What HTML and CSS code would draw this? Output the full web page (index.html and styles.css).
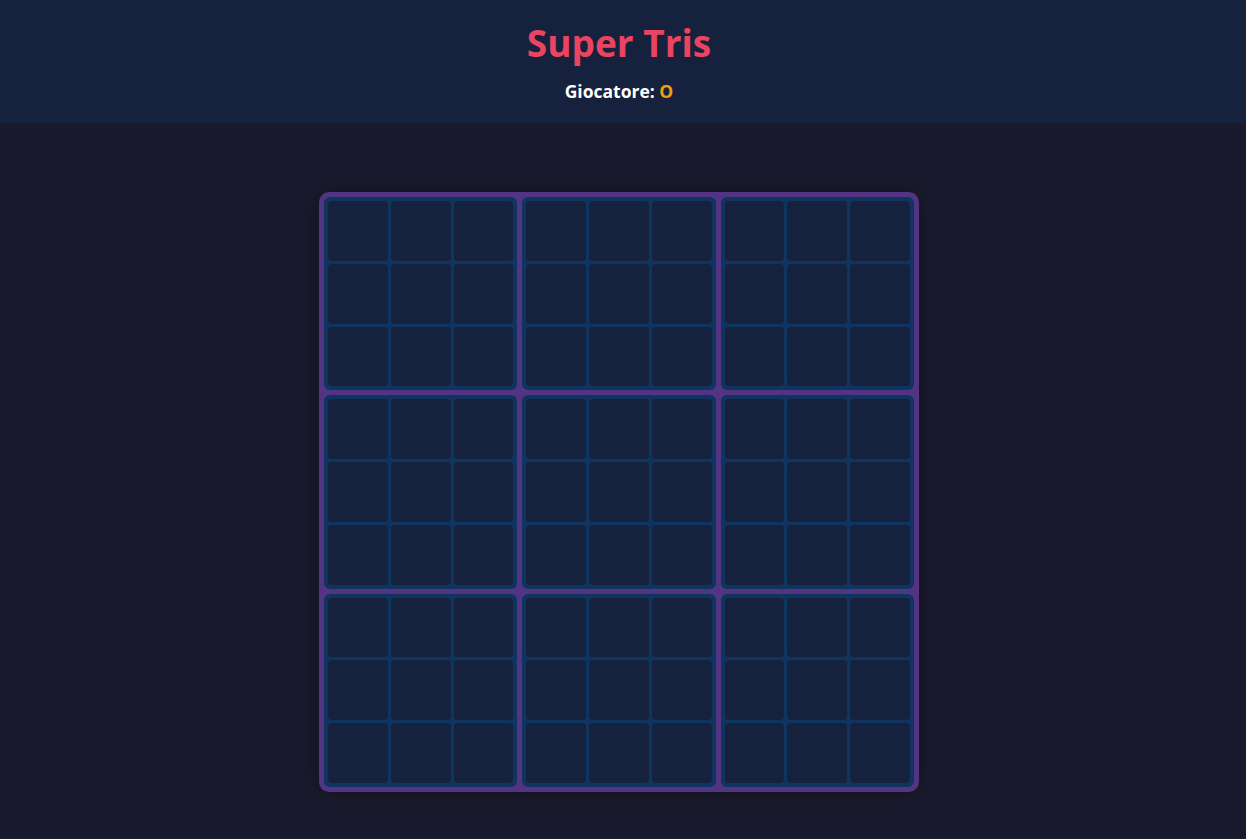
FILE: index.html
```html
<!DOCTYPE html>
<html lang="it">
<head>
<meta charset="utf-8">
<title>Super Tris</title>
<link rel="stylesheet" href="styles.css">
</head>
<body>
<header class="top">
  <h1 class="title">Super Tris</h1>
  <div class="status">Giocatore: <span class="player">O</span></div>
</header>
<main class="main">
  <div class="board" id="board"></div>
</main>
<script>
  var board = document.getElementById('board');
  for (var i = 0; i < 9; i++) {
    var sb = document.createElement('div');
    sb.className = 'small';
    for (var j = 0; j < 9; j++) {
      var c = document.createElement('div');
      c.className = 'cell';
      sb.appendChild(c);
    }
    board.appendChild(sb);
  }
</script>
</body>
</html>
```
FILE: styles.css
```css
* { box-sizing: border-box; }
html, body { margin: 0; padding: 0; }
body {
  background: #1a1a2e;
  font-family: "Open Sans", "Noto Sans", sans-serif;
  color: #ffffff;
  min-height: 839px;
}
.top {
  background: #16213e;
  height: 123px;
  text-align: center;
  padding-top: 18px;
  padding-right: 8px;
}
.title {
  margin: 0;
  color: #e94560;
  font-size: 37px;
  font-weight: 700;
  line-height: 50px;
}
.status {
  margin-top: 11px;
  font-size: 17.5px;
  font-weight: 700;
  line-height: 24px;
}
.player { color: #f39c12; }
.main {
  display: flex;
  justify-content: center;
  padding-top: 69px;
  padding-right: 8px;
}
.board {
  width: 600px;
  height: 600px;
  background: #533483;
  border-radius: 10px;
  padding: 5px;
  display: grid;
  grid-template-columns: repeat(3, 1fr);
  grid-template-rows: repeat(3, 1fr);
  gap: 5px;
  box-shadow: 0 0 20px rgba(0, 0, 0, 0.35);
}
.small {
  background: #0f3460;
  border-radius: 6px;
  padding: 4px;
  display: grid;
  grid-template-columns: repeat(3, 1fr);
  grid-template-rows: repeat(3, 1fr);
  gap: 3px;
}
.cell {
  background: #16213e;
  border-radius: 4px;
}
```
